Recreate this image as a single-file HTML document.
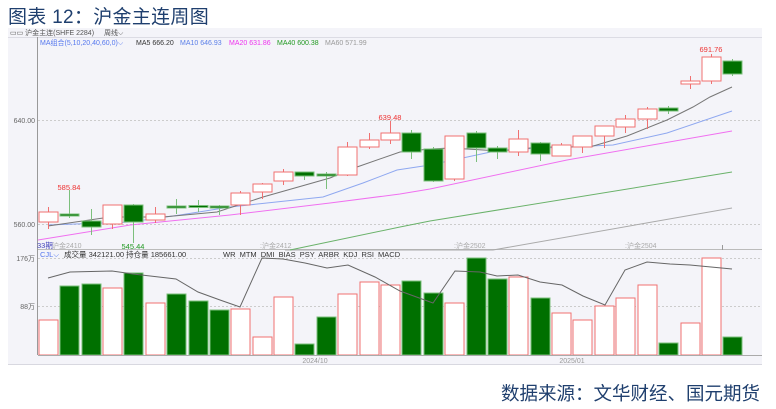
<!DOCTYPE html>
<html><head><meta charset="utf-8">
<style>
html,body{margin:0;padding:0;background:#fff;width:776px;height:409px;overflow:hidden}
body{position:relative;font-family:"Liberation Sans","Noto Sans CJK SC",sans-serif}
.title{position:absolute;left:8px;top:2px;font-size:19px;color:#1f3f6e;letter-spacing:0.3px}
.src{position:absolute;left:501px;top:380px;font-size:18.5px;color:#1f3f6e;white-space:nowrap}
svg{position:absolute;left:0;top:0}
svg text{font-family:"Liberation Sans","Noto Sans CJK SC",sans-serif}
</style></head><body>
<div class="title">图表 12：沪金主连周图</div>
<svg width="776" height="409" viewBox="0 0 776 409">
<rect x="8" y="28" width="754" height="337" fill="#f4f4f9"/>
<line x1="8" y1="37.5" x2="762" y2="37.5" stroke="#dcdce4"/>
<line x1="37.5" y1="37" x2="37.5" y2="355" stroke="#999"/>
<line x1="8" y1="364.5" x2="762" y2="364.5" stroke="#d8d8e0"/>
<text x="10" y="35" font-size="7" fill="#555">▭▭ 沪金主连(SHFE 2284)</text>
<text x="104" y="35" font-size="7" fill="#555">周线⌵</text>
<text x="40" y="45" font-size="7" fill="#5577ee">MA组合(5,10,20,40,60,0)⌵</text>
<text x="136" y="45" font-size="7" fill="#333">MA5 666.20</text>
<text x="180" y="45" font-size="7" fill="#5b7fe8">MA10 646.93</text>
<text x="229" y="45" font-size="7" fill="#ee33ee">MA20 631.86</text>
<text x="277" y="45" font-size="7" fill="#229922">MA40 600.38</text>
<text x="325" y="45" font-size="7" fill="#999">MA60 571.99</text>
<line x1="38" y1="120.5" x2="762" y2="120.5" stroke="#ccc" stroke-dasharray="2,2"/>
<line x1="38" y1="224.5" x2="762" y2="224.5" stroke="#ccc" stroke-dasharray="2,2"/>
<text x="35" y="123" font-size="7" fill="#666" text-anchor="end">640.00</text>
<text x="35" y="227" font-size="7" fill="#666" text-anchor="end">560.00</text>
<line x1="38" y1="249.5" x2="762" y2="249.5" stroke="#bbb"/>
<polyline fill="none" stroke="#aaa" stroke-width="1" points="285,250 493,250 732,208"/>
<polyline fill="none" stroke="#6ab26a" stroke-width="1" points="290,250 400,227 430,221 732,172"/>
<polyline fill="none" stroke="#f070f0" stroke-width="1" points="38,240 130,225 230,215 330,203 400,194 430,189 567,160 732,131"/>
<polyline fill="none" stroke="#8fa8f0" stroke-width="1" points="48,225 130,222 180,215 230,207 323,197 363,183 397,170 430,165 500,150 613,145 667,133 732,111"/>
<polyline fill="none" stroke="#777" stroke-width="1" points="48,226 110,217 163,217 217,212 263,197 330,178 357,167 400,152 430,149 450,148 500,151 540,147 590,147 627,136 667,120 693,107 710,97 732,87"/>
<g stroke-width="1">
<g stroke="#f07070" fill="#fff">
<line x1="48.5" y1="207" x2="48.5" y2="229"/><rect x="39" y="212" width="19" height="10"/>
<line x1="112.5" y1="205" x2="112.5" y2="229"/><rect x="103" y="205" width="19" height="19"/>
<line x1="155.5" y1="207" x2="155.5" y2="223"/><rect x="146" y="214" width="19" height="6"/>
<line x1="240.5" y1="191" x2="240.5" y2="215"/><rect x="231" y="193" width="19" height="12"/>
<line x1="262.5" y1="183" x2="262.5" y2="199"/><rect x="253" y="184" width="19" height="8"/>
<line x1="283.5" y1="169" x2="283.5" y2="185"/><rect x="274" y="172" width="19" height="9"/>
<line x1="347.5" y1="142" x2="347.5" y2="176"/><rect x="338" y="147" width="19" height="28"/>
<line x1="369.5" y1="133" x2="369.5" y2="149"/><rect x="360" y="140" width="19" height="7"/>
<line x1="390.5" y1="121" x2="390.5" y2="144"/><rect x="381" y="133" width="19" height="7"/>
<line x1="454.5" y1="136" x2="454.5" y2="181"/><rect x="445" y="136" width="19" height="43"/>
<line x1="518.5" y1="130" x2="518.5" y2="156"/><rect x="509" y="139" width="19" height="13"/>
<line x1="561.5" y1="143" x2="561.5" y2="156"/><rect x="552" y="145" width="19" height="11"/>
<line x1="582.5" y1="136" x2="582.5" y2="153"/><rect x="573" y="136" width="19" height="11"/>
<line x1="604.5" y1="126" x2="604.5" y2="148"/><rect x="595" y="126" width="19" height="10"/>
<line x1="625.5" y1="115" x2="625.5" y2="133"/><rect x="616" y="119" width="19" height="8"/>
<line x1="647.5" y1="107" x2="647.5" y2="129"/><rect x="638" y="109" width="19" height="10"/>
<line x1="690.5" y1="76" x2="690.5" y2="89"/><rect x="681" y="81" width="19" height="3"/>
<line x1="711.5" y1="54" x2="711.5" y2="84"/><rect x="702" y="57" width="19" height="24"/>
</g>
<g stroke="#7cbf7c" fill="#007000">
<line x1="69.5" y1="190" x2="69.5" y2="218"/><rect x="60" y="214" width="19" height="2"/>
<line x1="91.5" y1="209" x2="91.5" y2="235"/><rect x="82" y="221" width="19" height="6"/>
<line x1="133.5" y1="204" x2="133.5" y2="243"/><rect x="124" y="205" width="19" height="17"/>
<line x1="176.5" y1="199" x2="176.5" y2="214"/><rect x="167" y="206" width="19" height="2"/>
<line x1="198.5" y1="200" x2="198.5" y2="212"/><rect x="189" y="205.5" width="19" height="2"/>
<line x1="219.5" y1="205" x2="219.5" y2="215"/><rect x="210" y="206" width="19" height="2"/>
<line x1="304.5" y1="172" x2="304.5" y2="180"/><rect x="295" y="172" width="19" height="4"/>
<line x1="326.5" y1="172" x2="326.5" y2="189"/><rect x="317" y="174" width="19" height="2"/>
<line x1="411.5" y1="130" x2="411.5" y2="159"/><rect x="402" y="133" width="19" height="19"/>
<line x1="433.5" y1="147" x2="433.5" y2="182"/><rect x="424" y="149" width="19" height="32"/>
<line x1="476.5" y1="131" x2="476.5" y2="162"/><rect x="467" y="133" width="19" height="15"/>
<line x1="497.5" y1="146" x2="497.5" y2="159"/><rect x="488" y="148" width="19" height="4"/>
<line x1="540.5" y1="142" x2="540.5" y2="161"/><rect x="531" y="143" width="19" height="11"/>
<line x1="668.5" y1="106" x2="668.5" y2="114"/><rect x="659" y="108" width="19" height="3"/>
<line x1="732.5" y1="59" x2="732.5" y2="76"/><rect x="723" y="61" width="19" height="13"/>
</g>
</g>
<text x="69" y="190" font-size="7.5" fill="#ee3333" text-anchor="middle">585.84</text>
<text x="390" y="120" font-size="7.5" fill="#ee3333" text-anchor="middle">639.48</text>
<text x="711" y="52" font-size="7.5" fill="#ee3333" text-anchor="middle">691.76</text>
<text x="133" y="249" font-size="7.5" fill="#229922" text-anchor="middle">545.44</text>
<text x="37" y="248" font-size="7.5" fill="#4444bb">33期</text>
<text x="52" y="248" font-size="7" fill="#aaa">沪金2410</text>
<text x="260" y="248" font-size="7" fill="#aaa">:沪金2412</text>
<text x="454" y="248" font-size="7" fill="#aaa">:沪金2502</text>
<text x="625" y="248" font-size="7" fill="#aaa">:沪金2504</text>
<line x1="722.5" y1="245" x2="722.5" y2="250" stroke="#999"/>
<text x="40" y="257" font-size="7.5" fill="#5577ee">CJL⌵</text>
<text x="64" y="257" font-size="7.5" fill="#333">成交量 342121.00  持仓量 185661.00</text>
<text x="223" y="257" font-size="7.5" fill="#333" word-spacing="2">WR MTM DMI BIAS PSY ARBR KDJ RSI MACD</text>
<line x1="38" y1="258.5" x2="762" y2="258.5" stroke="#ccc" stroke-dasharray="2,2"/>
<line x1="38" y1="306.5" x2="762" y2="306.5" stroke="#ccc" stroke-dasharray="2,2"/>
<text x="35" y="261" font-size="7" fill="#666" text-anchor="end">176万</text>
<text x="35" y="309" font-size="7" fill="#666" text-anchor="end">88万</text>
<g stroke="#f07070" fill="#fff">
<rect x="39" y="320" width="19" height="35"/>
<rect x="103" y="288" width="19" height="67"/>
<rect x="146" y="303" width="19" height="52"/>
<rect x="231" y="309" width="19" height="46"/>
<rect x="253" y="337" width="19" height="18"/>
<rect x="274" y="297" width="19" height="58"/>
<rect x="338" y="294" width="19" height="61"/>
<rect x="360" y="282" width="19" height="73"/>
<rect x="381" y="285" width="19" height="70"/>
<rect x="445" y="303" width="19" height="52"/>
<rect x="509" y="277" width="19" height="78"/>
<rect x="552" y="313" width="19" height="42"/>
<rect x="573" y="320" width="19" height="35"/>
<rect x="595" y="306" width="19" height="49"/>
<rect x="616" y="298" width="19" height="57"/>
<rect x="638" y="285" width="19" height="70"/>
<rect x="681" y="323" width="19" height="32"/>
<rect x="702" y="258" width="19" height="97"/>
</g>
<g stroke="#7cbf7c" fill="#007000">
<rect x="60" y="286" width="19" height="69"/>
<rect x="82" y="284" width="19" height="71"/>
<rect x="124" y="273" width="19" height="82"/>
<rect x="167" y="294" width="19" height="61"/>
<rect x="189" y="301" width="19" height="54"/>
<rect x="210" y="310" width="19" height="45"/>
<rect x="295" y="344" width="19" height="11"/>
<rect x="317" y="317" width="19" height="38"/>
<rect x="402" y="281" width="19" height="74"/>
<rect x="424" y="293" width="19" height="62"/>
<rect x="467" y="258" width="19" height="97"/>
<rect x="488" y="279" width="19" height="76"/>
<rect x="531" y="298" width="19" height="57"/>
<rect x="659" y="343" width="19" height="12"/>
<rect x="723" y="337" width="19" height="18"/>
</g>
<polyline fill="none" stroke="#666" stroke-width="1" points="48,278 70,272 112,271 133,274 176,279 198,292 220,300 240,307 262,258 283,259 305,263 327,268 348,265 375,277 400,291 433,303 455,271 480,272 497,276 518,275 540,282 562,285 583,296 605,305 625,270 647,262 670,264 690,265 711,267 732,269"/>
<line x1="38" y1="355.5" x2="762" y2="355.5" stroke="#aaa"/>
<text x="315" y="363" font-size="7" fill="#999" text-anchor="middle">2024/10</text>
<text x="572" y="363" font-size="7" fill="#999" text-anchor="middle">2025/01</text>
</svg>
<div class="src">数据来源：文华财经、国元期货</div>
</body></html>
